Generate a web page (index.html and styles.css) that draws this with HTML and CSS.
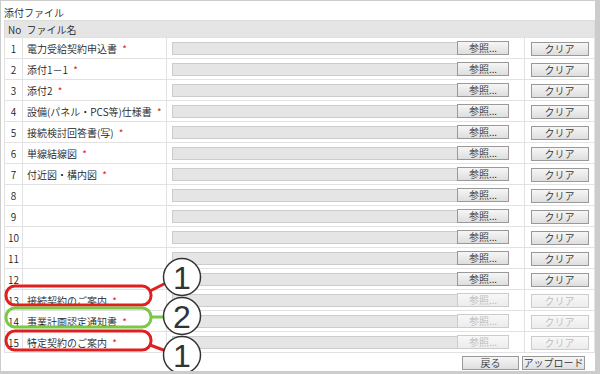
FILE: index.html
```html
<!DOCTYPE html>
<html lang="ja">
<head>
    <meta charset="UTF-8">
    <title>添付ファイル</title>
    <link rel="stylesheet" href="styles.css">
</head>
<body>
    <div class="panel">
        <div class="caption">添付ファイル</div>
        <table class="files">
            <colgroup>
                <col class="c-no">
                <col class="c-name">
                <col class="c-file">
                <col class="c-clear">
            </colgroup>
            <thead>
                <tr><th class="no">No</th><th colspan="3">ファイル名</th></tr>
            </thead>
            <tbody id="rows"></tbody>
        </table>
        <div class="actions">
            <button class="btn back">戻る</button>
            <button class="btn upload">アップロード</button>
        </div>

        <svg class="marks" width="600" height="374" viewBox="0 0 600 374">
            <g fill="none" stroke-width="3">
                <rect x="6" y="286" width="145" height="19" rx="9" stroke="#e02020"/>
                <line x1="150" y1="291" x2="166" y2="283" stroke="#e02020"/>
                <rect x="6" y="308" width="145" height="19" rx="9" stroke="#7ac943"/>
                <line x1="150" y1="317" x2="164" y2="317" stroke="#7ac943"/>
                <rect x="6" y="331" width="145" height="19" rx="9" stroke="#e02020"/>
                <line x1="150" y1="345" x2="166" y2="351" stroke="#e02020"/>
            </g>
            <g fill="#fff" stroke="#333" stroke-width="1.5">
                <circle cx="182" cy="277" r="18.5"/>
                <circle cx="182" cy="316" r="18.5"/>
                <circle cx="182" cy="355" r="18.5"/>
            </g>
            <g class="num" text-anchor="middle">
                <text x="182" y="289">1</text>
                <text x="182" y="328">2</text>
                <text x="182" y="367">1</text>
            </g>
        </svg>
    </div>

    <script>
        const files = [
            { name: '電力受給契約申込書', req: true },
            { name: '添付1－1', req: true },
            { name: '添付2', req: true },
            { name: '設備(パネル・PCS等)仕様書', req: true },
            { name: '接続検討回答書(写)', req: true },
            { name: '単線結線図', req: true },
            { name: '付近図・構内図', req: true },
            { name: '' },
            { name: '' },
            { name: '' },
            { name: '' },
            { name: '' },
            { name: '接続契約のご案内', req: true, off: true },
            { name: '事業計画認定通知書', req: true, off: true },
            { name: '特定契約のご案内', req: true, off: true }
        ];

        const tbody = document.getElementById('rows');
        files.forEach(function(f, i) {
            const tr = document.createElement('tr');
            const dis = f.off ? ' disabled' : '';
            tr.innerHTML = `
                <td class="no">${i + 1}</td>
                <td class="name">${f.name}${f.req ? ' <span class="req">*</span>' : ''}</td>
                <td class="file">
                    <div class="picker">
                        <span class="path"></span>
                        <button class="btn browse"${dis}>参照...</button>
                    </div>
                </td>
                <td class="clear"><button class="btn"${dis}>クリア</button></td>
            `;
            tbody.appendChild(tr);
        });
    </script>
</body>
</html>
```

FILE: styles.css
```css
body {
    margin: 0;
    font-family: "Noto Sans CJK JP", "DejaVu Sans", sans-serif;
    font-size: 10px;
    font-weight: 350;
    color: #222;
    background: #fff;
}
.panel {
    position: relative;
    box-sizing: border-box;
    width: 600px;
    height: 374px;
    padding: 0 6px 0 3px;
    border: 1px solid #ccc;
    border-right: 5px solid #ccc;
    border-bottom: 3px solid #ccc;
    overflow: hidden;
}
.caption {
    height: 19px;
    line-height: 24px;
}
.files {
    width: 590px;
    border-collapse: collapse;
    border: 1px solid #ddd;
    table-layout: fixed;
}
.c-no { width: 18px; }
.c-name { width: 144px; }
.c-file { width: 358px; }
.c-clear { width: 70px; }
.files th {
    height: 16px;
    padding: 0 0 0 4px;
    background: #e5e5e5;
    font-weight: inherit;
    text-align: left;
}
.files th.no {
    padding-left: 3px;
}
.files td {
    height: 20px;
    padding: 0;
    border: 1px solid #e2e2e2;
    white-space: nowrap;
}
.files td.no {
    text-align: center;
}
.files td.name {
    padding-left: 4px;
}
.files td.clear {
    text-align: center;
}
.req {
    color: #e02020;
    margin-left: 3px;
    font-size: 10px;
}
.picker {
    display: flex;
    align-items: center;
    margin: 0 15px 0 5px;
}
.path {
    flex: 1;
    height: 11px;
    background: #e5e5e5;
    border: 1px solid #ccc;
    border-right: none;
}
.btn {
    font-family: inherit;
    font-size: 10px;
    font-weight: inherit;
    color: #333;
    height: 14px;
    padding: 0;
    line-height: 12px;
    background: linear-gradient(#f6f6f6, #dedede);
    border: 1px solid #999;
    border-radius: 0;
}
.btn.browse {
    width: 52px;
}
.clear .btn {
    width: 58px;
}
.btn:disabled {
    color: #bbb;
    border-color: #ccc;
    background: linear-gradient(#f8f8f8, #ececec);
}
.actions {
    display: flex;
    justify-content: flex-end;
    gap: 3px;
    padding-top: 3px;
}
.btn.back {
    width: 57px;
}
.btn.upload {
    width: 63px;
    margin-right: 4px;
}
.marks {
    position: absolute;
    left: -1px;
    top: -1px;
    pointer-events: none;
}
.num text {
    font-family: "Liberation Sans", sans-serif;
    font-size: 32px;
    fill: #333;
}
```
